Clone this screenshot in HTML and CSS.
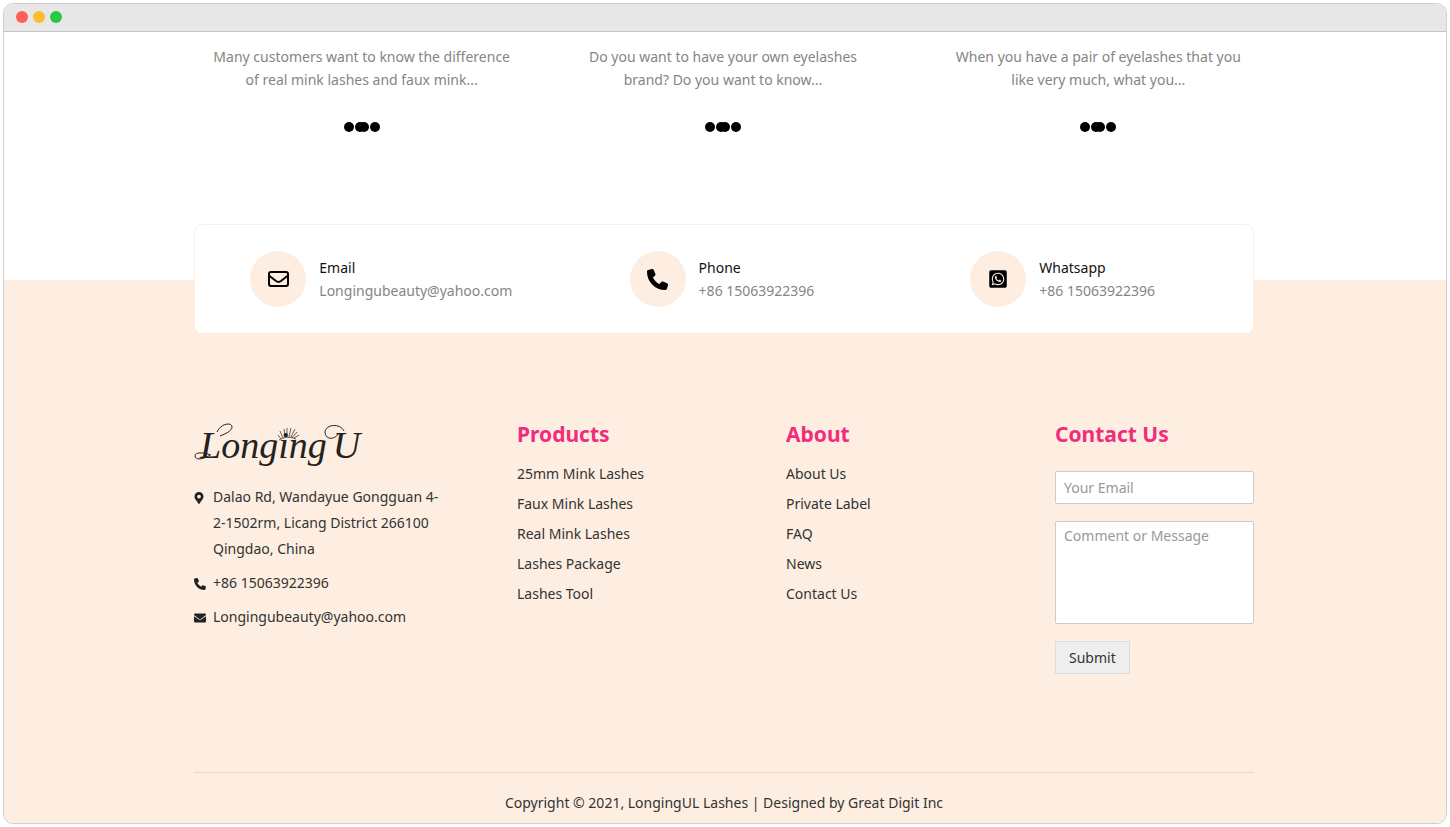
FILE: index.html
```html
<!DOCTYPE html>
<html lang="en">
<head>
<meta charset="utf-8">
<meta name="viewport" content="width=device-width, initial-scale=1">
<title>LongingU Lashes</title>
<link rel="stylesheet" href="styles.css">
</head>
<body>
<svg class="symbols" aria-hidden="true">
  <symbol id="phone" viewBox="0 0 512 512"><path d="M164.900 24.600c-7.700-18.600-28-28.500-47.400-23.200l-88 24C12.100 30.200 0 46 0 64c0 247.400 200.600 448 448 448 18 0 33.800-12.100 38.600-29.500l24-88c5.300-19.400-4.600-39.700-23.200-47.400l-96-40c-16.300-6.800-35.200-2.100-46.300 11.600L304.700 368C234.300 334.700 177.300 277.700 144 207.300L193.300 167c13.700-11.200 18.400-30 11.600-46.300l-40-96z"/></symbol>
</svg>
<div class="window">
  <header class="titlebar"><span class="light red"></span><span class="light yellow"></span><span class="light green"></span></header>
  <main class="posts container">
    <article class="post"><p>Many customers want to know the difference<br>of real mink lashes and faux mink...</p><div class="dots"><i></i><i></i><i></i><i></i></div></article>
    <article class="post"><p>Do you want to have your own eyelashes<br>brand? Do you want to know...</p><div class="dots"><i></i><i></i><i></i><i></i></div></article>
    <article class="post"><p>When you have a pair of eyelashes that you<br>like very much, what you...</p><div class="dots"><i></i><i></i><i></i><i></i></div></article>
  </main>
  <footer class="footer">
    <section class="contacts container">
      <div class="contact">
        <span class="badge"><svg width="22" height="22" viewBox="0 0 22 22" fill="none" stroke="#000" stroke-width="2"><rect x="2" y="4" width="19" height="14" rx="2"/><path d="M2 7.500l7 5.500q2.500 1.800 5 0l7-5.500"/></svg></span>
        <div><h3>Email</h3><p>Longingubeauty@yahoo.com</p></div>
      </div>
      <div class="contact">
        <span class="badge"><svg width="21" height="21"><use href="#phone"/></svg></span>
        <div><h3>Phone</h3><p>+86 15063922396</p></div>
      </div>
      <div class="contact">
        <span class="badge"><svg width="18" height="20" viewBox="0 0 448 512"><path d="M224 122.800c-72.700 0-131.800 59.100-131.900 131.800 0 24.900 7 49.200 20.200 70.100l3.100 5-13.300 48.600 49.900-13.100 4.800 2.900c20.200 12 43.400 18.400 67.100 18.400h.1c72.600 0 133.300-59.100 133.300-131.800 0-35.200-15.200-68.300-40.100-93.200-25-25-58-38.700-93.200-38.700zm77.500 188.400c-3.300 9.300-19.100 17.700-26.700 18.800-12.600 1.900-22.400.9-47.500-9.900-39.700-17.200-65.700-57.200-67.700-59.800-2-2.600-16.200-21.500-16.200-41s10.200-29.100 13.900-33.100c3.600-4 7.900-5 10.600-5 2.600 0 5.300 0 7.600.1 2.400.1 5.700-.9 8.900 6.800 3.300 7.900 11.200 27.400 12.200 29.400s1.700 4.300.3 6.900c-7.600 15.200-15.700 14.600-11.600 21.600 15.300 26.300 30.600 35.400 53.900 47.100 4 2 6.300 1.700 8.600-1 2.300-2.600 9.900-11.600 12.500-15.500 2.600-4 5.300-3.300 8.900-2 3.600 1.300 23.100 10.900 27.100 12.900s6.600 3 7.600 4.600c.9 1.900.9 9.900-2.400 19.100zM400 32H48C21.500 32 0 53.500 0 80v352c0 26.500 21.500 48 48 48h352c26.500 0 48-21.500 48-48V80c0-26.500-21.500-48-48-48zM223.900 413.200c-26.600 0-52.700-6.700-75.800-19.300L64 416l22.500-82.200c-13.900-24-21.200-51.300-21.200-79.300C65.400 167.100 136.500 96 223.900 96c42.400 0 82.200 16.500 112.200 46.500 29.900 30 47.900 69.800 47.900 112.200 0 87.400-72.700 158.500-160.100 158.500z"/></svg></span>
        <div><h3>Whatsapp</h3><p>+86 15063922396</p></div>
      </div>
    </section>
    <div class="columns container">
      <section>
        <a class="logo" href="#"><span>Longing</span><span>U</span>
          <svg class="flourish" viewBox="0 0 170 46" fill="none" stroke="#222" aria-hidden="true"><path d="M16 32C9 37 1 37 1 33c0-4 8-4 16-1M23 9C27 0 38-1 38 4c0 4-7 7-12 9M150 8C146 0 132 1 131 9c0 8 10 8 13 2"/><path stroke-width=".7" d="M85 17q8-5 17-1M87 16l-3-4M89 15l-3-7M91 14l-1-8M93 14V5M95 14l2-9M97 14l4-8M98 15l5-6M100 15l5-3"/></svg>
        </a>
        <address>
          <div class="line"><svg width="10" height="12" viewBox="0 0 384 512"><path d="M172 502C27 291 0 270 0 192a192 192 0 1 1 384 0c0 78-27 99-172 310q-20 20-40 0zM192 272a80 80 0 1 0 0-160 80 80 0 0 0 0 160z"/></svg><span>Dalao Rd, Wandayue Gongguan 4-<br>2-1502rm, Licang District 266100<br>Qingdao, China</span></div>
          <div class="line"><svg width="12" height="12"><use href="#phone"/></svg><span>+86 15063922396</span></div>
          <div class="line"><svg width="12" height="12" viewBox="0 0 512 512"><path d="M0 128V112q0-48 48-48h416q48 0 48 48v16L290 294q-34 25-68 0zM0 176l205 148q51 35 102 0l205-148v224q0 48-48 48H48q-48 0-48-48z"/></svg><span>Longingubeauty@yahoo.com</span></div>
        </address>
      </section>
      <nav aria-label="Products"><h2>Products</h2><ul><li><a href="#">25mm Mink Lashes</a></li><li><a href="#">Faux Mink Lashes</a></li><li><a href="#">Real Mink Lashes</a></li><li><a href="#">Lashes Package</a></li><li><a href="#">Lashes Tool</a></li></ul></nav>
      <nav aria-label="About"><h2>About</h2><ul><li><a href="#">About Us</a></li><li><a href="#">Private Label</a></li><li><a href="#">FAQ</a></li><li><a href="#">News</a></li><li><a href="#">Contact Us</a></li></ul></nav>
      <section><h2>Contact Us</h2>
        <form class="form">
          <input type="email" aria-label="Your Email" placeholder="Your Email">
          <textarea aria-label="Comment or Message" placeholder="Comment or Message"></textarea>
          <button type="button">Submit</button>
        </form>
      </section>
    </div>
    <p class="copyright container">Copyright © 2021, LongingUL Lashes | Designed by Great Digit Inc</p>
  </footer>
</div>
</body>
</html>
```
FILE: styles.css
```css
* { box-sizing: border-box; }
body {
  margin: 0;
  min-height: 100vh;
  padding: 3px;
  display: flex;
  background: #fff;
  color: #333;
  font: 14px/23px "Noto Sans", "Open Sans", sans-serif;
}
h2, h3, p, ul { margin: 0; padding: 0; }
ul { list-style: none; }
a { color: inherit; text-decoration: none; }
.symbols { position: absolute; width: 0; height: 0; }
.window {
  flex: 1;
  display: flex;
  flex-direction: column;
  border: 1px solid #d0d0d0;
  border-radius: 10px;
  overflow: hidden;
}
.titlebar {
  display: flex;
  align-items: center;
  gap: 5px;
  height: 28px;
  padding: 0 12px 1px;
  background: #e7e7e7;
  border-bottom: 1px solid #c4c4c4;
}
.light { width: 12px; height: 12px; border-radius: 50%; }
.red { background: #ff5f57; }
.yellow { background: #febc2e; }
.green { background: #28c840; }
.container { width: 100%; max-width: 1060px; margin-inline: auto; }
.posts {
  display: grid;
  grid-template-columns: 334fr 390fr 336fr;
  padding: 13px 2px 148px 0;
  color: #858585;
  text-align: center;
}
.post:last-child { padding-left: 26px; }
.dots { display: flex; justify-content: center; margin-top: 31px; }
.dots i { width: 10px; height: 10px; border-radius: 50%; background: #000; }
.dots i + i { margin-left: 1px; }
.dots i:nth-child(3) { margin-left: -6px; }
.footer { flex: 1; padding-right: 2px; background: #fdeee1; }
.contacts {
  display: grid;
  grid-template-columns: repeat(3, 1fr);
  margin-top: -56px;
  padding: 26px 20px 26px 16px;
  background: #fff;
  border: 1px solid #fdeee1;
  border-radius: 8px;
}
.contact { display: flex; align-items: center; justify-content: center; gap: 13px; color: #858585; }
.contact h3 { font-size: 14px; font-weight: 400; color: #111; }
.badge {
  display: grid;
  place-items: center;
  width: 56px;
  height: 56px;
  border-radius: 50%;
  background: #fdeee1;
}
.columns {
  display: grid;
  grid-template-columns: 323fr 269fr 269fr 199fr;
  padding: 85px 0 98px;
}
h2 { font-size: 21px; line-height: 30px; color: #f12c7c; }
nav ul { margin-top: 10px; }
nav li { line-height: 30px; }
.logo {
  position: relative;
  display: flex;
  gap: 6px;
  width: 170px;
  height: 52px;
  padding-left: 6px;
  color: #222;
  font: italic 38px/52px "Liberation Serif", serif;
}
.flourish { position: absolute; inset: 4px 0 0; }
address { display: grid; gap: 8px; margin-top: 13px; font-style: normal; line-height: 26px; }
.line { display: grid; grid-template-columns: 12px 1fr; column-gap: 7px; }
.line svg { margin-top: 8px; fill: #222; }
.form { display: grid; gap: 17px; margin-top: 22px; }
.form input, .form textarea {
  width: 100%;
  height: 33px;
  padding: 0 8px;
  border: 1px solid #ccc;
  border-radius: 2px;
  background: #fff;
  color: #333;
  font: inherit;
}
.form textarea { display: block; height: 103px; padding: 2px 8px; resize: none; }
.form ::placeholder { color: #999; opacity: 1; }
.form button {
  justify-self: start;
  height: 33px;
  padding: 0 13px;
  border: 1px solid #ddd;
  background: #eee;
  color: #333;
  font: inherit;
}
.copyright { padding: 18px 0 9px; border-top: 1px solid #ead9cc; text-align: center; }
```
